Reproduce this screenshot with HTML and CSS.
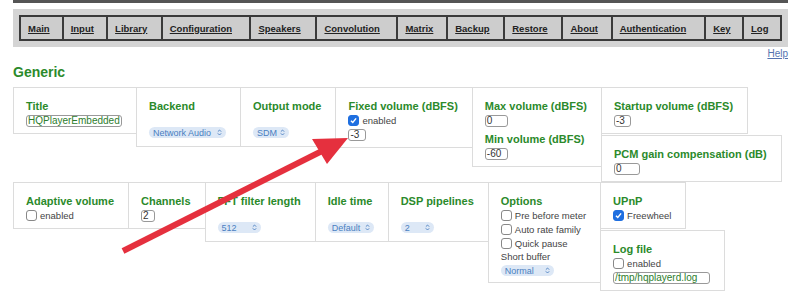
FILE: index.html
```html
<!DOCTYPE html>
<html>
  <head>
    <title>HQPlayer - Configuration</title>
    <link rel="stylesheet" href="styles.css">
  </head>
  <body>
    <div class="page">
      <div class="topbar"></div>
      <div class="navpanel">
        <table class="nav">
          <tr>
            <td><a href="#">Main</a></td>
            <td><a href="#">Input</a></td>
            <td><a href="#">Library</a></td>
            <td><a href="#">Configuration</a></td>
            <td><a href="#">Speakers</a></td>
            <td><a href="#">Convolution</a></td>
            <td><a href="#">Matrix</a></td>
            <td><a href="#">Backup</a></td>
            <td><a href="#">Restore</a></td>
            <td><a href="#">About</a></td>
            <td><a href="#">Authentication</a></td>
            <td><a href="#">Key</a></td>
            <td><a href="#">Log</a></td>
          </tr>
        </table>
      </div>
      <div class="help"><a href="#">Help</a></div>
      <h2 class="section">Generic</h2>

      <!-- first row -->
      <div class="row">
        <div class="box">
          <div class="label">Title</div>
          <span class="field text w96">HQPlayerEmbedded</span>
        </div>
        <div class="box sel">
          <div class="label">Backend</div>
          <span class="pill w77">Network Audio<svg class="updown" viewBox="0 0 6 8"><path d="M1 3 L3 1 L5 3 M1 5 L3 7 L5 5"/></svg></span>
        </div>
        <div class="box sel">
          <div class="label">Output mode</div>
          <span class="pill w36">SDM<svg class="updown" viewBox="0 0 6 8"><path d="M1 3 L3 1 L5 3 M1 5 L3 7 L5 5"/></svg></span>
        </div>
        <div class="box">
          <div class="label">Fixed volume (dBFS)</div>
          <div class="check"><span class="cb on"><svg viewBox="0 0 10 10"><path d="M2.2 5.2 L4.2 7.2 L7.9 2.6"/></svg></span>enabled</div>
          <span class="field w18">-3</span>
        </div>
        <div class="box">
          <div class="label">Max volume (dBFS)</div>
          <span class="field w23">0</span>
          <div class="label second">Min volume (dBFS)</div>
          <span class="field w23">-60</span>
        </div>
        <div class="stack">
          <div class="box">
            <div class="label">Startup volume (dBFS)</div>
            <span class="field w17">-3</span>
          </div>
          <div class="box">
            <div class="label">PCM gain compensation (dB)</div>
            <span class="field w26">0</span>
          </div>
        </div>
      </div>

      <!-- second row -->
      <div class="row">
        <div class="box">
          <div class="label">Adaptive volume</div>
          <div class="check"><span class="cb"></span>enabled</div>
        </div>
        <div class="box">
          <div class="label">Channels</div>
          <span class="field w14">2</span>
        </div>
        <div class="box sel">
          <div class="label">FFT filter length</div>
          <span class="pill w43">512<svg class="updown" viewBox="0 0 6 8"><path d="M1 3 L3 1 L5 3 M1 5 L3 7 L5 5"/></svg></span>
        </div>
        <div class="box sel">
          <div class="label">Idle time</div>
          <span class="pill w46">Default<svg class="updown" viewBox="0 0 6 8"><path d="M1 3 L3 1 L5 3 M1 5 L3 7 L5 5"/></svg></span>
        </div>
        <div class="box sel">
          <div class="label">DSP pipelines</div>
          <span class="pill w33">2<svg class="updown" viewBox="0 0 6 8"><path d="M1 3 L3 1 L5 3 M1 5 L3 7 L5 5"/></svg></span>
        </div>
        <div class="box">
          <div class="label">Options</div>
          <div class="check"><span class="cb"></span>Pre before meter</div>
          <div class="check"><span class="cb"></span>Auto rate family</div>
          <div class="check"><span class="cb"></span>Quick pause</div>
          <div class="plain">Short buffer</div>
          <span class="pill w53">Normal<svg class="updown" viewBox="0 0 6 8"><path d="M1 3 L3 1 L5 3 M1 5 L3 7 L5 5"/></svg></span>
        </div>
        <div class="stack">
          <div class="box">
            <div class="label">UPnP</div>
            <div class="check"><span class="cb on"><svg viewBox="0 0 10 10"><path d="M2.2 5.2 L4.2 7.2 L7.9 2.6"/></svg></span>Freewheel</div>
          </div>
          <div class="box">
            <div class="label">Log file</div>
            <div class="check"><span class="cb"></span>enabled</div>
            <span class="field text w97">/tmp/hqplayerd.log</span>
          </div>
        </div>
      </div>
    </div>

    <!-- annotation arrow drawn over the page -->
    <svg class="arrow" viewBox="0 0 800 305">
      <line x1="123" y1="251" x2="322" y2="151"/>
      <polygon points="348,138 312,139 327,164"/>
    </svg>
  </body>
</html>
```

FILE: styles.css
```css
body {
  margin: 0;
  font-family: "Liberation Sans", Arial, sans-serif;
  background-color: #fff;
  position: relative;
}

.page {
  width: 775px;
  margin-left: 13px;
}

.topbar {
  height: 3px;
  background-color: #555;
}

.navpanel {
  margin-top: 6px;
  background-color: #d4d4d4;
  padding: 6px 6px 6px 6px;
}

.nav {
  width: 100%;
  border-collapse: collapse;
  border: 2px solid #3a3a3a;
}

.nav td {
  border: 2px solid #3a3a3a;
  background-color: #cdcdcd;
  height: 22px;
  padding: 0 7px;
  font-size: 9.5px;
  font-weight: bold;
  white-space: nowrap;
}

.nav a {
  color: #222;
  text-decoration: underline;
}

.help {
  text-align: right;
  font-size: 10px;
  line-height: 12px;
  margin-top: 1px;
}

.help a {
  color: #5673b0;
}

.section {
  margin: 4px 0 7px 0;
  font-size: 14px;
  line-height: 16px;
  color: #2b8a2b;
}

.row {
  display: flex;
  align-items: flex-start;
}

.stack {
  display: flex;
  flex-direction: column;
  align-items: flex-start;
}

.stack .box + .box {
  margin-top: 1px;
}

.box {
  border: 1px solid #dcdcdc;
  background-color: #fff;
  padding: 12px 14px 6px 12px;
  margin-right: -1px;
}

.box.sel {
  padding-bottom: 8px;
}

.label {
  font-size: 11px;
  line-height: 13px;
  font-weight: bold;
  color: #2b8a2b;
  white-space: nowrap;
}

.label.second {
  margin-top: 6px;
}

.field {
  display: block;
  box-sizing: border-box;
  height: 12px;
  margin-top: 2px;
  border: 1px solid #999;
  border-radius: 3px;
  font-size: 10px;
  line-height: 10px;
  padding: 0 1px;
  color: #333;
  white-space: nowrap;
  overflow: hidden;
}

.field.text {
  color: #2d7d2d;
}

.check {
  display: flex;
  align-items: center;
  height: 14px;
  font-size: 9.5px;
  color: #444;
  white-space: nowrap;
}

.plain {
  font-size: 9.5px;
  line-height: 13px;
  color: #444;
}

.cb {
  width: 9px;
  height: 9px;
  border: 1px solid #888;
  border-radius: 3px;
  margin-right: 3px;
  display: inline-block;
}

.cb.on {
  background-color: #1f6fe0;
  border-color: #1f6fe0;
}

.cb svg {
  display: block;
  width: 9px;
  height: 9px;
  fill: none;
  stroke: #fff;
  stroke-width: 1.6;
}

.pill {
  display: flex;
  align-items: center;
  justify-content: space-between;
  box-sizing: border-box;
  height: 11px;
  margin-top: 14px;
  padding: 0 4px 0 4px;
  border-radius: 6px;
  background-color: #dde8f6;
  color: #4a7fc1;
  font-size: 9px;
  white-space: nowrap;
}

.plain + .pill {
  margin-top: 2px;
}

.updown {
  width: 5px;
  height: 7px;
  fill: none;
  stroke: #4a7fc1;
  stroke-width: 1.1;
}

.w14 { width: 14px; }
.w17 { width: 17px; }
.w18 { width: 18px; }
.w23 { width: 23px; }
.w26 { width: 26px; }
.w96 { width: 96px; }
.w97 { width: 97px; }
.w33 { width: 33px; }
.w36 { width: 36px; }
.w43 { width: 43px; }
.w46 { width: 46px; }
.w53 { width: 53px; }
.w77 { width: 77px; }

.arrow {
  position: absolute;
  left: 0;
  top: 0;
  width: 800px;
  height: 305px;
  pointer-events: none;
}

.arrow line {
  stroke: #e5303e;
  stroke-width: 6;
}

.arrow polygon {
  fill: #e5303e;
}
```
